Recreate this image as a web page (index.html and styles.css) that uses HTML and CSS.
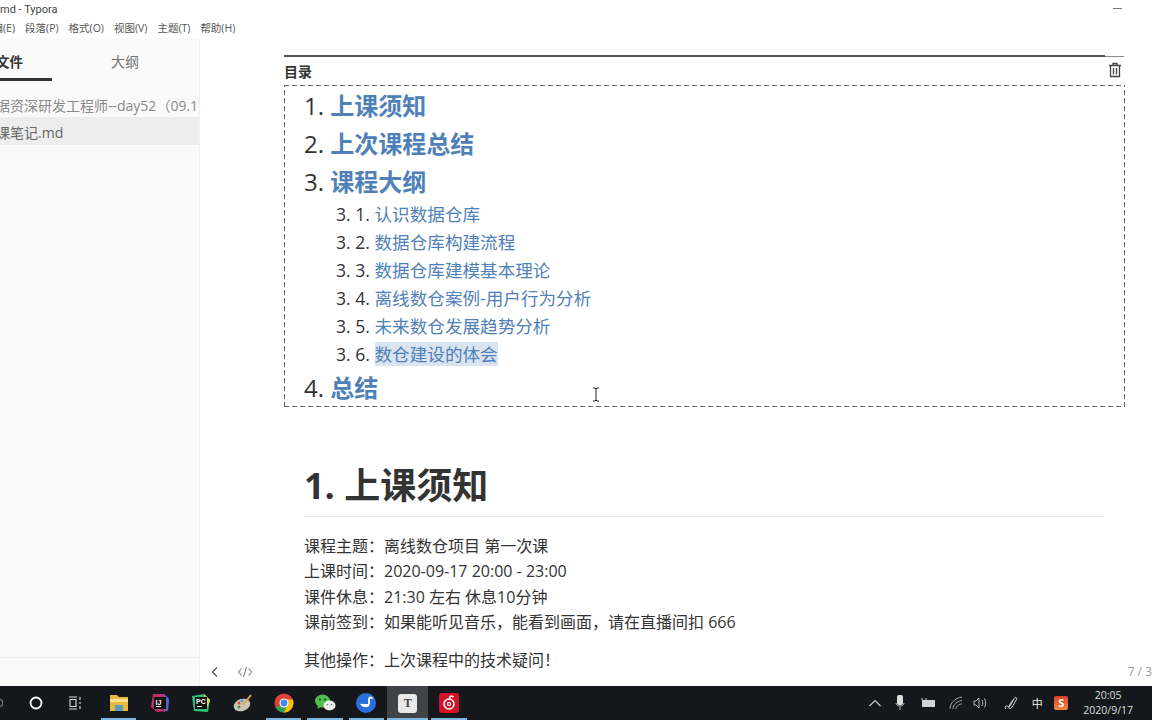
FILE: index.html
```html
<!DOCTYPE html>
<html lang="zh-CN">

<head>
    <meta charset="UTF-8">
    <title>Typora</title>
    <link rel="stylesheet" href="styles.css">
</head>

<body>
    <div class="app">
        <header class="titlebar">
            <span class="title">md - Typora</span>
            <span class="minimize"></span>
        </header>
        <nav class="menubar">
            <span class="menu-first">编(E)</span>
            <span>段落(P)</span>
            <span>格式(O)</span>
            <span>视图(V)</span>
            <span>主题(T)</span>
            <span>帮助(H)</span>
        </nav>
        <div class="workspace">
            <aside class="sidebar">
                <div class="tabs">
                    <div class="tab tab-active">文件</div>
                    <div class="tab">大纲</div>
                </div>
                <div class="folder">据资深研发工程师--day52（09.17）</div>
                <div class="file">课笔记.md</div>
                <div class="sidebar-foot"></div>
            </aside>
            <main class="editor">
                <div class="progress"><div class="progress-bar"></div></div>
                <section class="toc-wrap">
                    <div class="toc-head">
                        <strong>目录</strong>
                        <svg width="14" height="16" viewBox="0 0 14 16"><path d="M1 3.500h12M5 3.500V1.500h4v2M2.500 3.500v11h9v-11M5.500 6v6.500M8.500 6v6.500" fill="none" stroke="#444" stroke-width="1.300"/></svg>
                    </div>
                    <div class="toc">
                        <div class="toc-main">1. <a>上课须知</a></div>
                        <div class="toc-main">2. <a>上次课程总结</a></div>
                        <div class="toc-main">3. <a>课程大纲</a></div>
                        <div class="toc-sub">3. 1. <a>认识数据仓库</a></div>
                        <div class="toc-sub">3. 2. <a>数据仓库构建流程</a></div>
                        <div class="toc-sub">3. 3. <a>数据仓库建模基本理论</a></div>
                        <div class="toc-sub">3. 4. <a>离线数仓案例-用户行为分析</a></div>
                        <div class="toc-sub">3. 5. <a>未来数仓发展趋势分析</a></div>
                        <div class="toc-sub">3. 6. <a class="selected">数仓建设的体会</a></div>
                        <div class="toc-main">4. <a>总结</a></div>
                    </div>
                </section>
                <h1>1. 上课须知</h1>
                <p class="notes">
                    课程主题：离线数仓项目 第一次课<br>
                    上课时间：2020-09-17 20:00 - 23:00<br>
                    课件休息：21:30 左右 休息10分钟<br>
                    课前签到：如果能听见音乐，能看到画面，请在直播间扣 666
                </p>
                <p class="notes">其他操作：上次课程中的技术疑问！</p>
                <svg class="cursor" width="8" height="15" viewBox="0 0 8 15"><path d="M1 1h2l1 1 1-1h2M4 2v11M1 14h2l1-1 1 1h2" fill="none" stroke="#222" stroke-width="1"/></svg>
                <svg class="foot-icon foot-back" width="10" height="12" viewBox="0 0 10 12"><path d="M7 1.500 2.500 6 7 10.500" fill="none" stroke="#555" stroke-width="1.400"/></svg>
                <svg class="foot-icon foot-code" width="16" height="12" viewBox="0 0 16 12"><path d="M4.500 2.500 1.500 6l3 3.500M11.500 2.500 14.500 6l-3 3.500M9.500 1 6.500 11" fill="none" stroke="#888" stroke-width="1.100"/></svg>
                <div class="word-count">7 / 3</div>
            </main>
        </div>
    </div>
    <footer class="taskbar">
        <div class="task-left">
            <span class="search-stub"></span>
            <svg class="cortana" width="14" height="14" viewBox="0 0 14 14"><circle cx="7" cy="7" r="5.500" fill="none" stroke="#fff" stroke-width="1.800"/></svg>
            <svg class="taskview" width="16" height="14" viewBox="0 0 16 14"><path d="M1 1h8M1 13h8M2 3.500h6v7H2zM12 1v3M12 6v2M12 10v3" fill="none" stroke="#ddd" stroke-width="1.100"/></svg>
            <div class="task-app running">
                <svg width="20" height="18" viewBox="0 0 20 18"><path d="M1 1h7l2 2h9v14H1z" fill="#e8b93f"/><path d="M1 5h18v3H1z" fill="#fbe08a"/><path d="M6 11h8v6H6z" fill="#5b9bc4"/></svg>
            </div>
            <div class="task-app">
                <svg width="20" height="20" viewBox="0 0 20 20"><path d="M3 1h11l5 5-1 12-11 1-6-5z" fill="#c22a6a"/><path d="M14 1l5 5-1 10-4 3z" fill="#4a66d8"/><rect x="4" y="4" width="12" height="12" fill="#111"/><text x="5.500" y="11.500" class="icon-letter">IJ</text><path d="M6 13.500h5" stroke="#fff"/></svg>
            </div>
            <div class="task-app">
                <svg width="20" height="20" viewBox="0 0 20 20"><path d="M1 3l12-2 6 6-2 12L3 18z" fill="#2fbf71"/><path d="M13 1l6 6-3 8z" fill="#e6d83c"/><rect x="4" y="4" width="12" height="12" fill="#111"/><text x="5" y="11" class="icon-letter">PC</text><path d="M6 13.500h5" stroke="#fff"/></svg>
            </div>
            <div class="task-app">
                <svg width="20" height="20" viewBox="0 0 20 20"><ellipse cx="9" cy="12" rx="8.500" ry="6" fill="#c9c4b4" transform="rotate(-20 9 12)"/><circle cx="6" cy="10" r="1.500" fill="#d94b3d"/><circle cx="9" cy="8" r="1.300" fill="#4a90d9"/><circle cx="6" cy="14" r="1.500" fill="#3f8f5a"/><path d="M10 12 18 2" stroke="#e0a64a" stroke-width="2"/></svg>
            </div>
            <div class="task-app running">
                <svg width="20" height="20" viewBox="0 0 20 20"><circle cx="10" cy="10" r="9.500" fill="#db4437"/><path d="M10 10 1.800 14.800A9.500 9.500 0 0 0 10 19.500L14 11z" fill="#2f9e4f"/><path d="M18.800 6.500A9.500 9.500 0 0 1 10 19.500L14 11 10 6.500z" fill="#f4c20d"/><circle cx="10" cy="10" r="4.500" fill="#fff"/><circle cx="10" cy="10" r="3.400" fill="#4285f4"/></svg>
            </div>
            <div class="task-app running">
                <svg width="22" height="18" viewBox="0 0 22 18"><ellipse cx="8.500" cy="7" rx="7.500" ry="6.500" fill="#4cc04a"/><path d="M4 11 3.500 15 7 13z" fill="#4cc04a"/><ellipse cx="15.500" cy="11.500" rx="6" ry="5" fill="#eee"/><circle cx="6" cy="5.500" r="1" fill="#1a3d1a"/><circle cx="11" cy="5.500" r="1" fill="#1a3d1a"/><circle cx="13.500" cy="10.500" r=".8" fill="#777"/><circle cx="17.500" cy="10.500" r=".8" fill="#777"/></svg>
            </div>
            <div class="task-app running">
                <svg width="20" height="20" viewBox="0 0 20 20"><circle cx="10" cy="10" r="10" fill="#2a6fdb"/><path d="M5 11c2 3 7 3 8 0V6c0-2 3-2 3 0" fill="none" stroke="#fff" stroke-width="1.800"/><path d="M5 11h8v2c-3 2-6 1-8-2z" fill="#fff"/></svg>
            </div>
            <div class="task-app active running">
                <div class="typora-icon">T</div>
            </div>
            <div class="task-app running">
                <svg width="20" height="20" viewBox="0 0 20 20"><rect width="20" height="20" rx="3" fill="#d3122a"/><circle cx="10" cy="11" r="5" fill="none" stroke="#fff" stroke-width="1.600"/><circle cx="10" cy="11" r="1.500" fill="none" stroke="#fff" stroke-width="1.200"/><path d="M11 6c-1-3 2-3.500 3.500-2" fill="none" stroke="#fff" stroke-width="1.500"/></svg>
            </div>
        </div>
        <div class="tray">
            <svg class="tray-up" width="14" height="10" viewBox="0 0 14 10"><path d="M1.500 8 7 2.500 12.500 8" fill="none" stroke="#ccc" stroke-width="1.200"/></svg>
            <svg class="tray-mic" width="10" height="16" viewBox="0 0 10 16"><rect x="2" y="0" width="6" height="10" rx="2" fill="#ddd"/><path d="M1 8c0 4 8 4 8 0M5 12v3" fill="none" stroke="#bbb"/></svg>
            <svg class="tray-batt" width="14" height="10" viewBox="0 0 14 10"><rect x="1" y="2" width="13" height="7" fill="#cfd4d8"/><path d="M1 0v2M5 0v2" stroke="#ccc"/></svg>
            <svg class="tray-wifi" width="14" height="14" viewBox="0 0 14 14"><path d="M1 13C1 7 6 2 13 1M4 13c0-4 4-8 9-8.500M7 13c0-2 2-5 6-5" fill="none" stroke="#aaa"/></svg>
            <svg class="tray-sound" width="14" height="12" viewBox="0 0 14 12"><path d="M1 4h2l3-3v10L3 8H1zM9 3c1 2 1 4 0 6M11.500 1.500c1.500 3 1.500 6 0 9" fill="none" stroke="#bbb"/></svg>
            <svg class="tray-pen" width="14" height="14" viewBox="0 0 14 14"><path d="M2 13c-1.500-1-1-3 .5-3s2 1.500 3 .5 4-7 5-8.500 3 0 2 1.500-3 6-5 8-3 1-2.500-1 3-5 4-6.500" fill="none" stroke="#ddd" stroke-width="1"/></svg>
            <span class="tray-ime">中</span>
            <div class="sogou">S</div>
            <div class="clock">
                <span>20:05</span>
                <span>2020/9/17</span>
            </div>
        </div>
    </footer>
</body>

</html>
```

FILE: styles.css
```css
* {
    box-sizing: border-box;
}

html,
body {
    margin: 0;
    height: 720px;
    overflow: hidden;
}

body {
    display: flex;
    flex-direction: column;
    background-color: #fff;
    color: #333;
    font-family: "Open Sans", "Noto Sans CJK SC", sans-serif;
}

.app {
    height: 686px;
    display: flex;
    flex-direction: column;
    overflow: hidden;
}

.titlebar {
    height: 18px;
    display: flex;
    justify-content: space-between;
    align-items: center;
    font-family: Roboto, "Noto Sans CJK SC", sans-serif;
    font-size: 11px;
    color: #444;
}

.minimize {
    width: 9px;
    height: 1px;
    margin: 0 30px 2px 0;
    background-color: #777;
}

.menubar {
    height: 20px;
    display: flex;
    align-items: center;
    gap: 10px;
    padding-bottom: 2px;
    font-size: 10.500px;
    color: #555;
    overflow: hidden;
}

.menu-first {
    margin-left: -7.500px;
}

.workspace {
    flex: 1;
    display: flex;
    min-height: 0;
}

.sidebar {
    position: relative;
    width: 200px;
    flex-shrink: 0;
    background-color: #fafafa;
    border-right: 1px solid #f1f1f1;
    overflow: hidden;
}

.tabs {
    display: flex;
    height: 43px;
}

.tab {
    padding-top: 13px;
    margin-left: 59px;
    font-size: 14px;
    color: #777;
}

.tab-active {
    width: 52px;
    margin-left: 0;
    border-bottom: 3px solid #333;
    font-size: 13.500px;
    text-indent: -4px;
    color: #333;
    font-weight: 700;
}

.folder {
    margin: 14px 0 0 -4px;
    height: 22px;
    font-size: 14px;
    line-height: 22px;
    color: #8a8a8a;
    white-space: nowrap;
}

.file {
    height: 28px;
    background-color: #ededed;
    font-size: 14px;
    line-height: 31px;
    text-indent: -4px;
    color: #666;
    white-space: nowrap;
}

.sidebar-foot {
    position: absolute;
    left: 0;
    right: 0;
    bottom: 0;
    height: 29px;
    border-top: 1px solid #eee;
}

.editor {
    position: relative;
    flex: 1;
    padding: 17px 27px 0 84px;
    overflow: hidden;
}

.foot-icon {
    position: absolute;
    bottom: 8px;
}

.foot-back {
    left: 10px;
}

.foot-code {
    left: 37px;
}

.progress {
    width: 840px;
    height: 2px;
    border-bottom: 1px solid #888;
}

.progress-bar {
    width: 821px;
    height: 2px;
    background-color: #555;
}

.toc-wrap {
    width: 841px;
}

.toc-head {
    height: 28px;
    display: flex;
    justify-content: space-between;
    align-items: center;
    padding-right: 3px;
    font-size: 14px;
}

.toc-head svg {
    margin-bottom: 2px;
}

.toc {
    height: 322px;
    padding: 2px 0 0 20px;
    background-image:
        repeating-linear-gradient(90deg, #666 0 5px, transparent 5px 8px),
        repeating-linear-gradient(90deg, #666 0 5px, transparent 5px 8px),
        repeating-linear-gradient(0deg, #666 0 5px, transparent 5px 8px),
        repeating-linear-gradient(0deg, #666 0 5px, transparent 5px 8px);
    background-size: 100% 1px, 100% 1px, 1px 100%, 1px 100%;
    background-position: top, bottom, left, right;
    background-repeat: no-repeat;
}

.toc a {
    color: #4f81b8;
}

.toc-main {
    height: 38px;
    line-height: 38px;
    font-size: 24px;
}

.toc-main a {
    font-weight: 700;
}

.toc-sub {
    height: 28px;
    line-height: 26px;
    padding-left: 32px;
    font-size: 17.600px;
}

.selected {
    background-color: #d9e4f0;
}

h1 {
    width: 799px;
    height: 58px;
    margin: 52px 0 0 20px;
    font-size: 36px;
    line-height: 54px;
    font-weight: 700;
    border-bottom: 1px solid #e6e6e6;
}

.notes {
    margin: 17px 0 0 20px;
    font-size: 16px;
    line-height: 25.300px;
}

.notes + .notes {
    margin-top: 13px;
}

.cursor {
    position: absolute;
    left: 392px;
    top: 349px;
}

.word-count {
    position: absolute;
    right: 0;
    bottom: 6px;
    font-size: 12px;
    color: #999;
}

.taskbar {
    height: 34px;
    display: flex;
    justify-content: space-between;
    background-color: #14181c;
    color: #ddd;
}

.task-left {
    display: flex;
    align-items: center;
}

.search-stub {
    width: 3px;
    height: 8px;
    margin-right: 26px;
    border: 1px solid #888;
    border-left: 0;
    border-radius: 0 4px 4px 0;
}

.taskview {
    margin: 0 14px 0 25px;
}

.task-app {
    position: relative;
    width: 41.300px;
    height: 34px;
    display: flex;
    align-items: center;
    justify-content: center;
}

.task-app.running::after {
    content: "";
    position: absolute;
    left: 3px;
    right: 3px;
    bottom: 0;
    height: 2px;
    background-color: #7db6e0;
}

.task-app.active::after {
    left: 0;
    right: 0;
}

.active {
    background-color: #404347;
}

.icon-letter {
    font-family: "Liberation Sans", sans-serif;
    font-size: 7px;
    font-weight: 700;
    fill: #fff;
}

.typora-icon {
    width: 19px;
    height: 19px;
    border-radius: 3px;
    background-color: #e8e8e8;
    color: #444;
    font-family: "Liberation Serif", serif;
    font-size: 12px;
    font-weight: 700;
    line-height: 19px;
    text-align: center;
}

.tray {
    display: flex;
    align-items: center;
    padding-right: 19px;
}

.tray-mic {
    margin-left: 13px;
}

.tray-batt {
    margin-left: 16px;
}

.tray-wifi {
    margin-left: 14px;
}

.tray-sound {
    margin-left: 10px;
}

.tray-pen {
    margin-left: 17px;
}

.tray-ime {
    margin-left: 13.500px;
    font-size: 11px;
    color: #eee;
}

.sogou {
    width: 14px;
    height: 14px;
    margin-left: 11.500px;
    background-image: linear-gradient(#d9402a, #f08a3c);
    border-radius: 2px;
    color: #fff;
    font-size: 11px;
    font-weight: 700;
    line-height: 14px;
    text-align: center;
}

.clock {
    display: flex;
    flex-direction: column;
    align-items: center;
    margin-left: 15px;
    font-size: 10.500px;
    line-height: 15px;
    color: #ddd;
}
```
